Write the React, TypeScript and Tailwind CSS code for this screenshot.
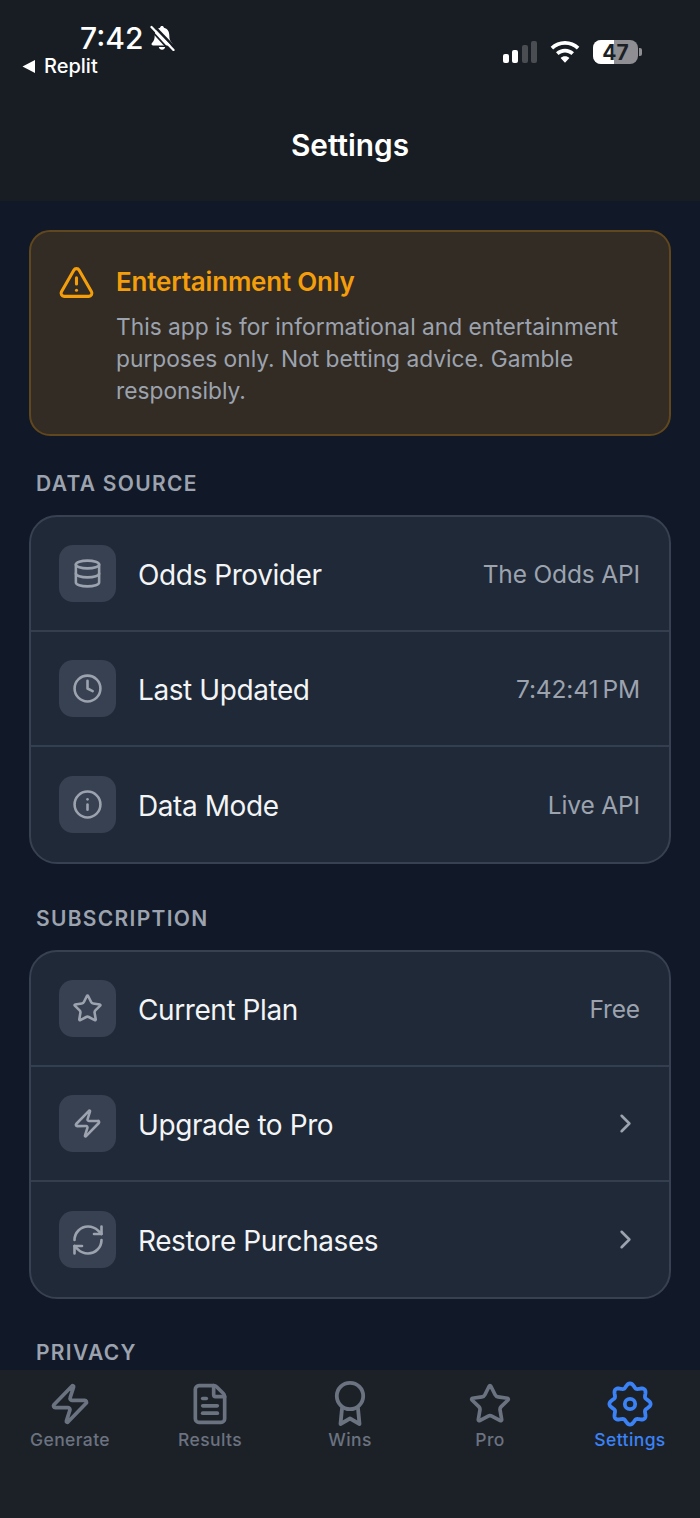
import React from "react";
import { TriangleAlert, Database, Clock, Info, Star, Zap, RefreshCw, ChevronRight, FileText } from "lucide-react";

type RowData = { icon: React.ComponentType<any>; label: string; value?: string; iconSize?: number; iconStroke?: number };

function Row({ icon: Icon, label, value, last, iconSize = 31, iconStroke = 2 }: RowData & { last?: boolean }) {
  return (
    <div className={`flex h-[115px] items-center pl-[28px] pr-[28px] ${last ? "" : "border-b-2 border-[#333e4e]"}`}>
      <div className="flex h-[57px] w-[57px] items-center justify-center rounded-[14px] bg-[#374151]">
        <Icon size={iconSize} color="#9ca3af" strokeWidth={iconStroke} />
      </div>
      <div className="ml-[22px] flex-1 pt-[2px] text-[28px] tracking-[-0.42px] text-[#f3f4f6]">{label}</div>
      {value ? (
        <div className="mr-[1px] pt-[2px] text-[24.5px] tracking-[-0.15px] text-[#9ca3af]">{value}</div>
      ) : (
        <ChevronRight size={31} color="#9ca3af" strokeWidth={2} />
      )}
    </div>
  );
}

function Section({ title, rows }: { title: string; rows: RowData[] }) {
  return (
    <div>
      <div className="mb-[15px] flex h-[32px] items-center pl-[7px] text-[21px] font-semibold tracking-[1.3px] text-[#9ca3af]">{title}</div>
      <div className="mb-[39px] overflow-hidden rounded-[28px] border-2 border-[#374151] bg-[#1f2937]">
        {rows.map((r, i) => (
          <Row key={r.label} {...r} last={i === rows.length - 1} />
        ))}
      </div>
    </div>
  );
}

const gearPath = (() => {
  const pts: string[] = [];
  for (let i = 0; i < 160; i++) {
    const t = (i / 160) * Math.PI * 2;
    const r = 18.5 + 2.1 * Math.cos(8 * t);
    pts.push(`${(24 + r * Math.sin(t)).toFixed(2)} ${(24 - r * Math.cos(t)).toFixed(2)}`);
  }
  return "M" + pts.join("L") + "Z";
})();

function GearIcon({ color }: { color: string }) {
  return (
    <svg width="48" height="48" viewBox="0 0 48 48" fill="none" stroke={color} strokeWidth="3.8" strokeLinejoin="round">
      <path d={gearPath} />
      <circle cx="24" cy="24" r="5.2" />
    </svg>
  );
}

function AwardIcon({ color }: { color: string }) {
  return (
    <svg width="48" height="48" viewBox="0 0 48 48" fill="none" stroke={color} strokeWidth="3.8" strokeLinejoin="round" strokeLinecap="round">
      <circle cx="24" cy="16" r="13.200" />
      <path d="M16 28.500 14.500 44 24 38.500 33.500 44 32 28.500" />
    </svg>
  );
}

function Slot({ children }: { children: React.ReactNode }) {
  return <div className="flex h-[48px] w-[48px] items-center justify-center">{children}</div>;
}

function Tab({ icon, label, active }: { icon: React.ReactNode; label: string; active?: boolean }) {
  return (
    <div className="flex w-[140px] flex-col items-center">
      <Slot>{icon}</Slot>
      <div className={`-mt-[1px] text-[17.5px] font-medium tracking-[0.4px] ${active ? "text-[#3b82f6]" : "text-[#6b7280]"}`}>{label}</div>
    </div>
  );
}

function BellOff() {
  return (
    <svg width="26" height="26" viewBox="0 0 26 26" className="ml-[6px]">
      <path d="M13 1c1 0 1.800.7 1.900 1.700 3.700.9 5.400 3.900 5.400 7.500 0 3.600.8 5.800 2.300 7.300.5.500.9 1 .9 1.600 0 .8-.6 1.300-1.500 1.300H4c-.9 0-1.500-.5-1.500-1.300 0-.6.4-1.100.9-1.600 1.500-1.500 2.300-3.700 2.300-7.300 0-3.600 1.700-6.600 5.400-7.500C11.200 1.700 12 1 13 1Z" fill="#fff" />
      <path d="M9.800 22h6.400c-.3 1.600-1.600 2.700-3.200 2.700S10.100 23.600 9.800 22Z" fill="#fff" />
      <path d="M4.500 0.500 27 24" stroke="#181d24" strokeWidth="2.600" />
      <path d="M2.500 2 24.500 25" stroke="#fff" strokeWidth="2.300" strokeLinecap="round" />
      <path d="M0 3 22 27" stroke="#181d24" strokeWidth="1.800" />
    </svg>
  );
}

function StatusRight() {
  return (
    <div className="flex items-center">
      <div className="flex items-end gap-[3.5px]">
        <div className="h-[9px] w-[6px] rounded-[2px] bg-white" />
        <div className="h-[13px] w-[6px] rounded-[2px] bg-white" />
        <div className="h-[18px] w-[6px] rounded-[2px] bg-[#4a4d52]" />
        <div className="h-[22px] w-[6px] rounded-[2px] bg-[#4a4d52]" />
      </div>
      <svg width="30" height="22" viewBox="0 0 31 23" className="ml-[13px]">
        <path d="M15.500 0C9.700 0 4.500 2.200.5 6l2.600 2.900C6.400 5.800 10.700 4 15.500 4s9.100 1.800 12.400 4.900L30.500 6C26.500 2.200 21.300 0 15.500 0Z" fill="#fff" />
        <path d="M15.500 8c-3.600 0-6.900 1.400-9.400 3.700l2.700 2.900c1.800-1.600 4.100-2.600 6.700-2.600s4.900 1 6.700 2.600l2.700-2.900C22.400 9.400 19.100 8 15.500 8Z" fill="#fff" />
        <path d="M15.500 16c-1.800 0-3.400.7-4.600 1.800l4.600 5 4.600-5c-1.200-1.100-2.800-1.800-4.600-1.800Z" fill="#fff" />
      </svg>
      <div className="ml-[13px] flex items-center">
        <div className="relative flex h-[24px] w-[45px] items-center justify-center overflow-hidden rounded-[8px] bg-[#8e8e93]">
          <div className="absolute inset-y-0 left-0 w-[21px] bg-white" />
          <span className="relative text-[21px] leading-none font-bold text-[#1c1f24]">47</span>
        </div>
        <div className="ml-[1px] h-[8px] w-[3px] rounded-r-[2px] bg-[#8e8e93]" />
      </div>
    </div>
  );
}

const dataRows: RowData[] = [
  { icon: Database, label: "Odds Provider", value: "The Odds API" },
  { icon: Clock, label: "Last Updated", value: "7:42:41\u202fPM" },
  { icon: Info, label: "Data Mode", value: "Live API" },
];
const subRows: RowData[] = [
  { icon: Star, label: "Current Plan", value: "Free" },
  { icon: Zap, label: "Upgrade to Pro" },
  { icon: RefreshCw, label: "Restore Purchases", iconSize: 36, iconStroke: 1.75 },
];

const gray = "#6b7280";

export default function App() {
  return (
    <div className="flex h-[1518px] w-[700px] flex-col overflow-hidden bg-[#111827] font-['Inter',sans-serif]">
      <header className="h-[201px] shrink-0 bg-[#181d24]">
        <div className="flex h-[78px] items-start justify-between pt-[20px] pr-[58px] pl-[22px]">
          <div className="flex flex-col">
            <div className="flex items-center pl-[58px]">
              <span className="text-[30px] leading-[36px] font-medium text-white">7:42</span>
              <BellOff />
            </div>
            <div className="flex items-center text-white">
              <svg width="14" height="13" viewBox="0 0 14 13"><path d="M0.500 6.500 13 0v13Z" fill="#fff" /></svg>
              <span className="ml-[8px] text-[20px] leading-[20px] font-medium">Replit</span>
            </div>
          </div>
          <div className="pt-[20px]"><StatusRight /></div>
        </div>
        <div className="pt-[48px] text-center text-[29.75px] leading-[38px] font-semibold text-white">Settings</div>
      </header>
      <main className="min-h-0 flex-1 overflow-hidden px-[29px] pt-[29px]">
        <div className="mb-[32px] flex h-[206px] rounded-[21px] border-2 border-[#61471d] bg-[#332c24] pt-[34px] pl-[28px]">
          <TriangleAlert size={37} color="#f59e0b" strokeWidth={2} className="-mt-[2px] -ml-[1px]" />
          <div className="ml-[21px]">
            <div className="text-[26px] leading-[32px] font-semibold tracking-[-0.2px] text-[#f59e0b]">Entertainment Only</div>
            <p className="mt-[13px] w-[525px] text-[22.75px] leading-[32px] text-[#9ca3af]">This app is for informational and entertainment purposes only. Not betting advice. Gamble responsibly.</p>
          </div>
        </div>
        <Section title="DATA SOURCE" rows={dataRows} />
        <Section title="SUBSCRIPTION" rows={subRows} />
        <div className="-mt-[1px] flex h-[32px] items-center pl-[7px] text-[21px] font-semibold tracking-[1.3px] text-[#9ca3af]">PRIVACY</div>
      </main>
      <nav className="flex h-[148px] shrink-0 bg-[#1c2127] pt-[10px]">
        <Tab icon={<Zap size={44} color={gray} strokeWidth={2} />} label="Generate" />
        <Tab icon={<FileText size={44} color={gray} strokeWidth={2} />} label="Results" />
        <Tab icon={<AwardIcon color={gray} />} label="Wins" />
        <Tab icon={<Star size={44} color={gray} strokeWidth={2} />} label="Pro" />
        <Tab icon={<GearIcon color="#3b82f6" />} label="Settings" active />
      </nav>
    </div>
  );
}
